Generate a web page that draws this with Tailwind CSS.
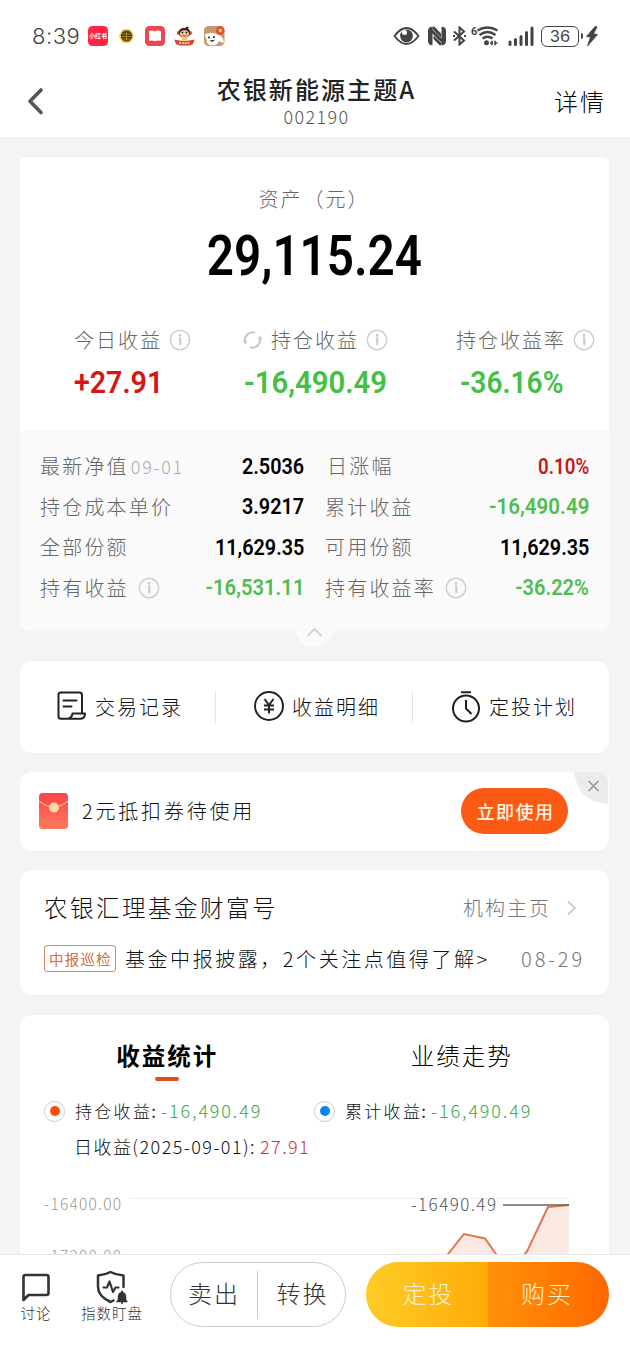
<!DOCTYPE html>
<html lang="zh-CN">
<head>
<meta charset="utf-8">
<meta name="viewport" content="width=device-width, initial-scale=1">
<title>农银新能源主题A</title>
<script src="https://cdn.jsdelivr.net/npm/@tailwindcss/browser@4"></script>
</head>
<body class="bg-[#f4f4f4]">
<svg class="hidden">
  <symbol id="info" viewBox="0 0 22 22"><circle cx="11" cy="11" r="9.7" fill="none" stroke="#cfcfcf" stroke-width="1.500"/><circle cx="11" cy="6.400" r="1.400" fill="#c8c8c8"/><path d="M9.800 9.500H11.300V16.300" fill="none" stroke="#c8c8c8" stroke-width="2"/></symbol>
</svg>
<div class="flex h-[1360px] w-[630px] flex-col overflow-hidden font-['Noto_Sans_CJK_SC',sans-serif] font-light text-[#111]">

  <header class="h-[137px] shrink-0 bg-white">
    <div class="flex h-[72px] items-center pl-8">
      <span class="w-[56px] font-['Inter','Noto_Sans_CJK_SC',sans-serif] text-[22px] font-light tracking-[0.500px] whitespace-nowrap text-[#444]">8:39</span>
      <svg class="h-5 w-5" viewBox="0 0 20 20"><rect width="20" height="20" rx="4.500" fill="#ff2442"/><text x="10" y="12.400" text-anchor="middle" font-size="6" font-weight="700" fill="#fff" font-family="Noto Sans CJK SC">小红书</text></svg>
      <svg class="ml-[10px] h-5 w-[17px]" viewBox="0 0 17 20"><path d="M4.500 3.200H12.500L16.300 10L12.500 16.800H4.500L.7 10Z" fill="#f6ce55"/><circle cx="8.500" cy="10" r="5.700" fill="#4d3b12"/><path d="M3.500 8H13.500M3.200 10.500H13.800M4.500 13H12.500M8.500 4.500V15.500" stroke="#d8ac3c" stroke-width=".6"/></svg>
      <svg class="ml-[10px] h-5 w-5" viewBox="0 0 20 20"><rect width="20" height="20" rx="4.500" fill="#ee4650"/><path d="M4 5.200Q7.500 3.800 10 5.500Q12.500 3.800 16 5.200V14.800Q12.500 13.800 10 15.200Q7.500 13.800 4 14.800Z" fill="#fff"/></svg>
      <svg class="ml-[9px] h-5 w-[21px]" viewBox="0 0 21 20"><circle cx="4.700" cy="7" r="2" fill="#bf7350"/><circle cx="16.300" cy="7" r="2" fill="#bf7350"/><path d="M4.500 7Q5 1.500 11 2Q12.500 0 15 1L14 2.800Q16.500 4 16.300 8Q15 11.500 10.500 11.500Q5.500 11.500 4.500 7Z" fill="#3e241c"/><ellipse cx="10.500" cy="7.800" rx="4.700" ry="3.500" fill="#f6c39c"/><circle cx="8.500" cy="6.600" r=".9" fill="#2a1712"/><circle cx="12.500" cy="6.600" r=".9" fill="#2a1712"/><path d="M8.500 9.200Q10.500 11 12.500 9.200" stroke="#c02c1c" fill="none"/><path d="M8 11H13V14.500H8Z" fill="#f3cb52"/><path d="M.5 13.600Q10.500 16.500 20.500 13.600Q20 19.500 15 19.500H6Q1 19.500 .5 13.600Z" fill="#d94a2c"/><path d="M5 17H16" stroke="#ffe2c8" stroke-width="1.400" stroke-dasharray="2 .8"/></svg>
      <svg class="ml-[9px] h-5 w-[21px]" viewBox="0 0 21 20"><rect width="20.500" height="20" rx="4.500" fill="#c49a6d"/><path d="M1 9Q1 7 4 7.500Q9 5.500 13 8.500Q18.500 9 20 16Q17.500 18 15 14.500Q14 19.500 8 19.500Q2 19 2.500 13Q1 11.500 1 9Z" fill="#fff"/><circle cx="5" cy="11.500" r="1" fill="#222"/><circle cx="10" cy="11" r="1" fill="#222"/><path d="M5.500 14.500Q8.500 17.500 11 13.800Z" fill="#333"/><circle cx="16.300" cy="4.500" r="4.400" fill="#e1512d"/><circle cx="16.300" cy="4.500" r="1.700" fill="#ffca7a"/></svg>

      <svg class="ml-[168px] h-5 w-[27px]" viewBox="0 0 26 20"><path d="M1 10Q7 2 13 2T25 10Q19 18 13 18T1 10Z" fill="none" stroke="#444" stroke-width="1.900"/><circle cx="13" cy="10" r="6.400" fill="#444"/><circle cx="11" cy="6.500" r="2.500" fill="#fff"/></svg>
      <svg class="ml-[7px] h-5 w-5" viewBox="0 0 20 20" fill="#444"><path d="M5.500 .8Q1 .8 1 5V15Q1 19.200 5.500 19.200V7.500L12.500 14.500V11L5.500 3.500Z"/><path d="M14.500 19.200Q19 19.200 19 15V5Q19 .8 14.500 .8V12.500L7.500 5.500V9L14.500 16.500Z"/><path d="M5.500 .8H7.500L14 7.500V11.500L5.500 3Z M14.500 19.200H12.500L6.500 13V9.500L14.500 17Z"/></svg>
      <svg class="ml-[5px] h-5 w-[15px]" viewBox="0 0 15 20"><path d="M2 5.500L12 14.500L7.500 18.500V1.500L12 5.500L2 14.500" fill="none" stroke="#444" stroke-width="2"/><path d="M1 10H3M12 10H14" stroke="#444" stroke-width="2"/></svg>
      <svg class="ml-[4px] h-5 w-[28px]" viewBox="0 0 28 20"><text x="0" y="9" font-size="11" font-weight="700" fill="#444" font-family="Roboto">6</text><g fill="none" stroke="#444" stroke-width="2.300"><path d="M6.500 4.500Q16.500-1.500 26.500 4.500"/><path d="M8.500 9Q16.500 3 24.500 9"/><path d="M11.500 12.500Q16.500 9 21.500 12.500"/></g><circle cx="15.500" cy="16.800" r="2.500" fill="#444"/><path d="M19 17H22M21 14.800V19.200M24 14.800V19.200M24 17H26.500" stroke="#444" stroke-width="1.600"/></svg>
      <svg class="ml-[9px] h-5 w-[26px]" viewBox="0 0 26 20"><path d="M2 18.500V16M7.500 18.500V13.500M13 18.500V10.500M18.500 18.500V6.500M24 18.500V2" stroke="#444" stroke-width="3" stroke-linecap="round"/></svg>
      <div class="ml-[7px] flex h-[21px] w-[38px] items-center justify-center rounded-[6px] border-[1.500px] border-[#444] font-['Inter'] text-[16.500px] leading-none font-normal text-[#444]">36</div>
      <div class="ml-[2px] h-[6px] w-[2px] rounded-r bg-[#444]"></div>
      <svg class="ml-[3px] h-5 w-[12px]" viewBox="0 0 12 20"><path d="M9.500 0L.5 10.500L4.500 11L1.500 20L11.500 8.500L7.500 8L11 1Z" fill="#444" stroke="#444" stroke-width=".8"/></svg>
    </div>
    <div class="flex h-[65px] pr-[24px] pl-[26px]">
      <svg class="mt-[14px] h-[32px] w-[20px]" viewBox="0 0 20 32"><path d="M15 4L4 15.300L15 26.500" fill="none" stroke="#555" stroke-width="3.600" stroke-linecap="round" stroke-linejoin="round"/></svg>
      <div class="flex flex-1 flex-col items-center pl-[33px]">
        <h1 class="mt-[3px] flex h-[28px] items-center text-[24px] leading-none font-medium tracking-[2.100px] text-[#222]">农银新能源主题A</h1>
        <span class="flex h-[25px] items-center text-[18px] leading-none tracking-[1.400px] text-[#555]">002190</span>
      </div>
      <a class="mt-[12px] flex h-[34px] items-center text-[24px] tracking-[2px] text-black">详情</a>
    </div>
  </header>

  <main class="flex h-[1117px] shrink-0 flex-col overflow-hidden px-5 pt-5">
    <section class="relative h-[474px] w-[589px] shrink-0">
      <div class="h-[273px] rounded-t-md bg-white text-[#666]">
        <div class="flex h-[70px] items-center justify-center pt-[13px] text-[20px] tracking-[2px]">资产<span class="mx-[1px]">（元）</span></div>
        <div class="flex h-[60px] items-center justify-center font-['Roboto'] text-[55.500px] font-semibold text-black"><span class="scale-x-[0.858]">29,115.24</span></div>
        <div class="flex h-[68px] items-end text-[20px] leading-[30px] tracking-[2px]">
          <div class="flex w-[222px] items-center gap-[7px] pl-[54px]">今日收益<svg class="h-[22px] w-[22px]"><use href="#info"/></svg></div>
          <div class="flex w-[214px] items-center gap-[7px]"><svg class="h-5 w-[21px]" viewBox="0 0 21 20" fill="none" stroke="#c8c8c8" stroke-width="2.200"><path d="M3 12A8 8 0 0 1 13 2.600M18 8A8 8 0 0 1 8 17.400"/><path d="M.8 11.500L3.500 14.500L5.500 10.800ZM20.200 8.500L17.500 5.500L15.500 9.200Z" fill="#c8c8c8" stroke="none"/></svg><span class="ml-[1px]">持仓收益</span><svg class="h-[22px] w-[22px]"><use href="#info"/></svg></div>
          <div class="flex items-center gap-[7px] whitespace-nowrap">持仓收益率<svg class="h-[22px] w-[22px]"><use href="#info"/></svg></div>
        </div>
        <div class="flex h-[54px] items-center font-['Roboto'] text-[32px] font-semibold">
          <span class="w-[224px] pl-[54px] text-[#d91414]"><span class="inline-block origin-left scale-x-[0.895]">+27.91</span></span><span class="w-[216px] text-[#45bf45]"><span class="inline-block origin-left scale-x-[0.915]">-16,490.49</span></span><span class="origin-left scale-x-[0.88] text-[#45bf45]">-36.16%</span>
        </div>
      </div>
      <div class="grid h-[201px] grid-cols-[264px_264px] content-start gap-x-[21px] rounded-b-lg bg-[#fafafa] px-5 pt-[16px] text-[20px] tracking-[2.200px] text-[#666] *:flex *:h-[40.500px] *:items-center *:justify-between">
        <div><span class="flex items-center">最新净值<span class="ml-[2px] text-[18px] tracking-[1.700px] text-[#aaa]">09-01</span></span><b class="origin-right scale-x-[0.9] font-['Roboto'] text-[22px] font-semibold tracking-normal text-black">2.5036</b></div>
        <div><span class="pl-[2px]">日涨幅</span><b class="origin-right scale-x-[0.85] font-['Roboto'] text-[22px] font-semibold tracking-normal text-[#c81818]">0.10%</b></div>
        <div><span>持仓成本单价</span><b class="origin-right scale-x-[0.9] font-['Roboto'] text-[22px] font-semibold tracking-normal text-black">3.9217</b></div>
        <div><span>累计收益</span><b class="origin-right scale-x-[0.935] font-['Roboto'] text-[22px] font-semibold tracking-normal text-[#4fbd4f]">-16,490.49</b></div>
        <div><span>全部份额</span><b class="origin-right scale-x-[0.9] font-['Roboto'] text-[22px] font-semibold tracking-normal text-black">11,629.35</b></div>
        <div><span>可用份额</span><b class="origin-right scale-x-[0.9] font-['Roboto'] text-[22px] font-semibold tracking-normal text-black">11,629.35</b></div>
        <div><span class="flex items-center gap-[9px]">持有收益<svg class="h-[22px] w-[22px]"><use href="#info"/></svg></span><b class="origin-right scale-x-[0.92] font-['Roboto'] text-[22px] font-semibold tracking-normal text-[#4fbd4f]">-16,531.11</b></div>
        <div><span class="flex items-center gap-[9px]">持有收益率<svg class="h-[22px] w-[22px]"><use href="#info"/></svg></span><b class="origin-right scale-x-[0.91] font-['Roboto'] text-[22px] font-semibold tracking-normal text-[#4fbd4f]">-36.22%</b></div>
      </div>
      <svg class="absolute top-[450px] left-[274px] h-10 w-10" viewBox="0 0 40 40"><circle cx="21" cy="20" r="20" fill="#fafafa"/><path d="M13.500 29L20.500 22L27.500 29" fill="none" stroke="#ccc" stroke-width="1.600"/></svg>
    </section>

    <section class="mt-[30px] flex h-[92px] w-[589px] shrink-0 items-center rounded-xl bg-white text-[20px] tracking-[2px] text-[#111]">
      <div class="flex h-[32px] w-[196px] items-center gap-[8px] border-r border-[#e6e6e6] pl-[36px]">
        <svg class="-mt-[2px] h-[32px] w-[31px]" viewBox="0 0 31 32" fill="none" stroke="#222" stroke-width="2" stroke-linecap="round" stroke-linejoin="round"><path d="M14 28.800H5Q2.500 28.800 2.500 26.500V4.500Q2.500 2.500 5 2.500H23.500Q26 2.500 26 5V22.500M7.500 10.500H20.500M7.500 16.500H15.500M16.500 23.500H29Q29 28.800 24 28.800H12.500Q16 27.500 16.500 23.500Z"/></svg>交易记录</div>
      <div class="flex h-[32px] w-[197px] items-center gap-[7px] border-r border-[#e6e6e6] pl-[37px]">
        <svg class="-mt-[2px] h-[32px] w-[32px]" viewBox="0 0 32 32" fill="none" stroke="#222" stroke-width="2"><circle cx="16" cy="16" r="14"/><path d="M11.500 9L16 15L20.500 9M16 15V23.500M11 15.500H21M11 19.500H21"/></svg>收益明细</div>
      <div class="flex h-[32px] items-center gap-[7px] pl-[37px]">
        <svg class="h-[34px] w-[32px]" viewBox="0 0 32 34" fill="none" stroke="#222" stroke-width="2"><circle cx="16" cy="18.500" r="13"/><path d="M11 2.300H21M16 10V18.500L21.500 24"/></svg>定投计划</div>
    </section>

    <section class="relative mt-[19px] flex h-[79px] w-[589px] shrink-0 items-center overflow-hidden rounded-xl bg-white pl-[19px] text-[20px]">
      <svg class="-mt-[2px] h-[36px] w-[29px]" viewBox="0 0 29 36"><defs><linearGradient id="env" x1="0" x2="0" y1="0" y2="1"><stop stop-color="#fa444a"/><stop offset="1" stop-color="#ff7a5c"/></linearGradient></defs><rect width="29" height="36" rx="3.500" fill="url(#env)"/><path d="M0 8Q14.500 20 29 8" fill="none" stroke="#ffb58c" stroke-width="1.200"/><circle cx="15" cy="14.500" r="5" fill="#ffdc9c"/></svg>
      <span class="-mt-[2px] ml-[14px] flex-1 tracking-[2.800px]">2元抵扣券待使用</span>
      <button class="-mt-px mr-[41px] h-[46px] w-[107px] rounded-full bg-[#fb5a14] pl-[2px] text-[18px] font-medium tracking-[1.500px] text-[#fff4e4]">立即使用</button>
      <svg class="absolute top-0 right-[1px] h-8 w-[34px]" viewBox="0 0 34 32"><path d="M0 0H24Q34 0 34 10V32Q4 30 0 0Z" fill="#ececec"/><path d="M14.500 9L24.500 19M24.500 9L14.500 19" stroke="#999" stroke-width="1.600"/></svg>
    </section>

    <section class="mt-[19px] h-[125px] w-[589px] shrink-0 rounded-xl bg-white pr-[24px] pl-[24px]">
      <div class="flex h-[64px] items-center justify-between pt-[11px]">
        <h2 class="text-[23.500px] tracking-[2.500px]">农银汇理基金财富号</h2>
        <span class="mr-[6px] flex items-center text-[20px] tracking-[2px] text-[#777]">机构主页<svg class="ml-[14px] h-4 w-[14px]" viewBox="0 0 14 16"><path d="M3 1.500L10 8L3 14.500" fill="none" stroke="#ccc" stroke-width="1.800"/></svg></span>
      </div>
      <div class="flex h-[49px] items-center whitespace-nowrap">
        <span class="flex h-[27px] w-[72px] items-center justify-center rounded-[3px] border border-[#d98560] pl-px text-[14.500px] font-normal tracking-[1.200px] text-[#d56a3c]">中报巡检</span>
        <span class="ml-[9px] flex-1 text-[20px] tracking-[2.550px]">基金中报披露，2个关注点值得了解&gt;</span>
        <span class="text-[20px] tracking-[2.900px] text-[#777]">08-29</span>
      </div>
    </section>

    <section class="mt-5 h-[260px] w-[589px] shrink-0 rounded-t-xl bg-white">
      <div class="grid h-[66px] grid-cols-2 text-center text-[23.500px] tracking-[2px] text-black">
        <div class="flex flex-col items-center"><span class="mt-[20px] h-[42px] leading-[40px] font-bold">收益统计</span><span class="h-1 w-6 shrink-0 rounded-full bg-[#e04e18]"></span></div>
        <div class="mt-[20px] leading-[40px]">业绩走势</div>
      </div>
      <div class="flex h-[60px] items-center pl-[24px] text-[17px]">
        <span class="mr-[10px] flex h-[21px] w-[21px] items-center justify-center rounded-full border border-[#ccc]"><i class="h-[10px] w-[10px] rounded-full bg-[#fa4d08]"></i></span>
        <span class="-mt-px w-[239px] tracking-[2.300px]">持仓收益<span class="-ml-[1px] font-normal">:</span><span class="ml-[3px] text-[18px] tracking-[1.850px] text-[#3ea63e]">-16,490.49</span></span>
        <span class="mr-[10px] flex h-[21px] w-[21px] items-center justify-center rounded-full border border-[#ccc]"><i class="h-[10px] w-[10px] rounded-full bg-[#0a84f0]"></i></span>
        <span class="-mt-px tracking-[2.300px]">累计收益<span class="-ml-[1px] font-normal">:</span><span class="ml-[3px] text-[18px] tracking-[1.850px] text-[#3ea63e]">-16,490.49</span></span>
      </div>
      <div class="flex h-[11px] items-center pl-[54px] text-[18px]"><span class="tracking-[1.450px]">日收益(2025-09-01):</span><span class="ml-[4px] tracking-[1.400px] text-[#d03030]">27.91</span></div>
      <svg class="mt-[2px] h-[121px] w-[589px]" viewBox="20 1154 589 121" font-family="Noto Sans CJK SC" font-size="15.500" font-weight="300">
        <path d="M129 1198.500H569" stroke="#eee"/>
        <text x="44" y="1210" fill="#999" textLength="77">-16400.00</text>
        <text x="44" y="1262" fill="#999" textLength="77">-17200.00</text>
        <path d="M433 1275L448 1254L464 1234L485 1238.500L496 1254L511 1275H515L527 1251.500L548 1207L569 1205V1275Z" fill="#fbeae4"/>
        <path d="M433 1275L448 1254L464 1234L485 1238.500L496 1254L511 1275M524 1255L527 1251.500L548 1207L569 1205" fill="none" stroke="#e27650" stroke-width="2"/>
        <path d="M503 1205H569" stroke="#666" stroke-width="1.700"/>
        <text x="411" y="1211" fill="#555" font-size="17" textLength="85">-16490.49</text>
      </svg>
    </section>
  </main>

  <nav class="flex h-[106px] shrink-0 border-t border-[#e8e8e8] bg-white pt-[7px] text-[#333]">
    <div class="flex w-[72px] flex-col items-center pt-[10px] text-[14.500px] tracking-[1px]">
      <svg class="h-[31px] w-[30px]" viewBox="0 0 30 31"><path d="M2.500 28V5Q2.500 3 4.500 3H25.500Q27.500 3 27.500 5V21Q27.500 23 25.500 23H7.500Z" fill="none" stroke="#333" stroke-width="2.600" stroke-linejoin="round"/></svg>
      <span class="-mt-[2px] leading-[24px]">讨论</span>
    </div>
    <div class="flex w-[80px] flex-col items-center pt-[8px] text-[14.500px] tracking-[1px]">
      <svg class="h-[34px] w-[32px]" viewBox="0 0 32 34" fill="none" stroke="#333" stroke-width="2.500" stroke-linecap="round" stroke-linejoin="round"><path d="M17.500 30.500L14.500 32Q2 26 2 17V5.500Q9 5 14.500 2Q20 5 27.500 5.500V17"/><path d="M7.500 17.500H11L13.500 11.500L17 22L19.500 17.500H22.500" stroke-width="2.200"/><path d="M20.500 32H31.500L30 29.500V26.500Q30 22.500 26 22Q22 22.500 22 26.500V29.500Z" fill="#333" stroke-width=".5"/><path d="M26 21.500V33" stroke-width="2"/></svg>
      <span class="-mt-[3px] leading-[24px] whitespace-nowrap">指数盯盘</span>
    </div>
    <div class="ml-[18px] flex h-[65px] w-[176px] items-center rounded-full border border-[#ccc] text-[24px] tracking-[2px]">
      <span class="flex h-[48px] w-[87px] items-center justify-center border-r border-[#ccc] pb-[3px]">卖出</span><span class="flex flex-1 items-center justify-center pb-[3px] pl-[2px]">转换</span>
    </div>
    <div class="ml-[20px] flex h-[65px] w-[243px] overflow-hidden rounded-full text-[24px] tracking-[2px] text-[#fff3cc]">
      <span class="flex w-[122px] items-center justify-center bg-linear-to-r from-[#ffcc26] to-[#ffab06] pb-[3px] pl-[3px]">定投</span><span class="flex flex-1 items-center justify-center bg-linear-to-r from-[#ff9208] to-[#ff6600] pr-[3px] pb-[3px]">购买</span>
    </div>
  </nav>
</div>
</body>
</html>
